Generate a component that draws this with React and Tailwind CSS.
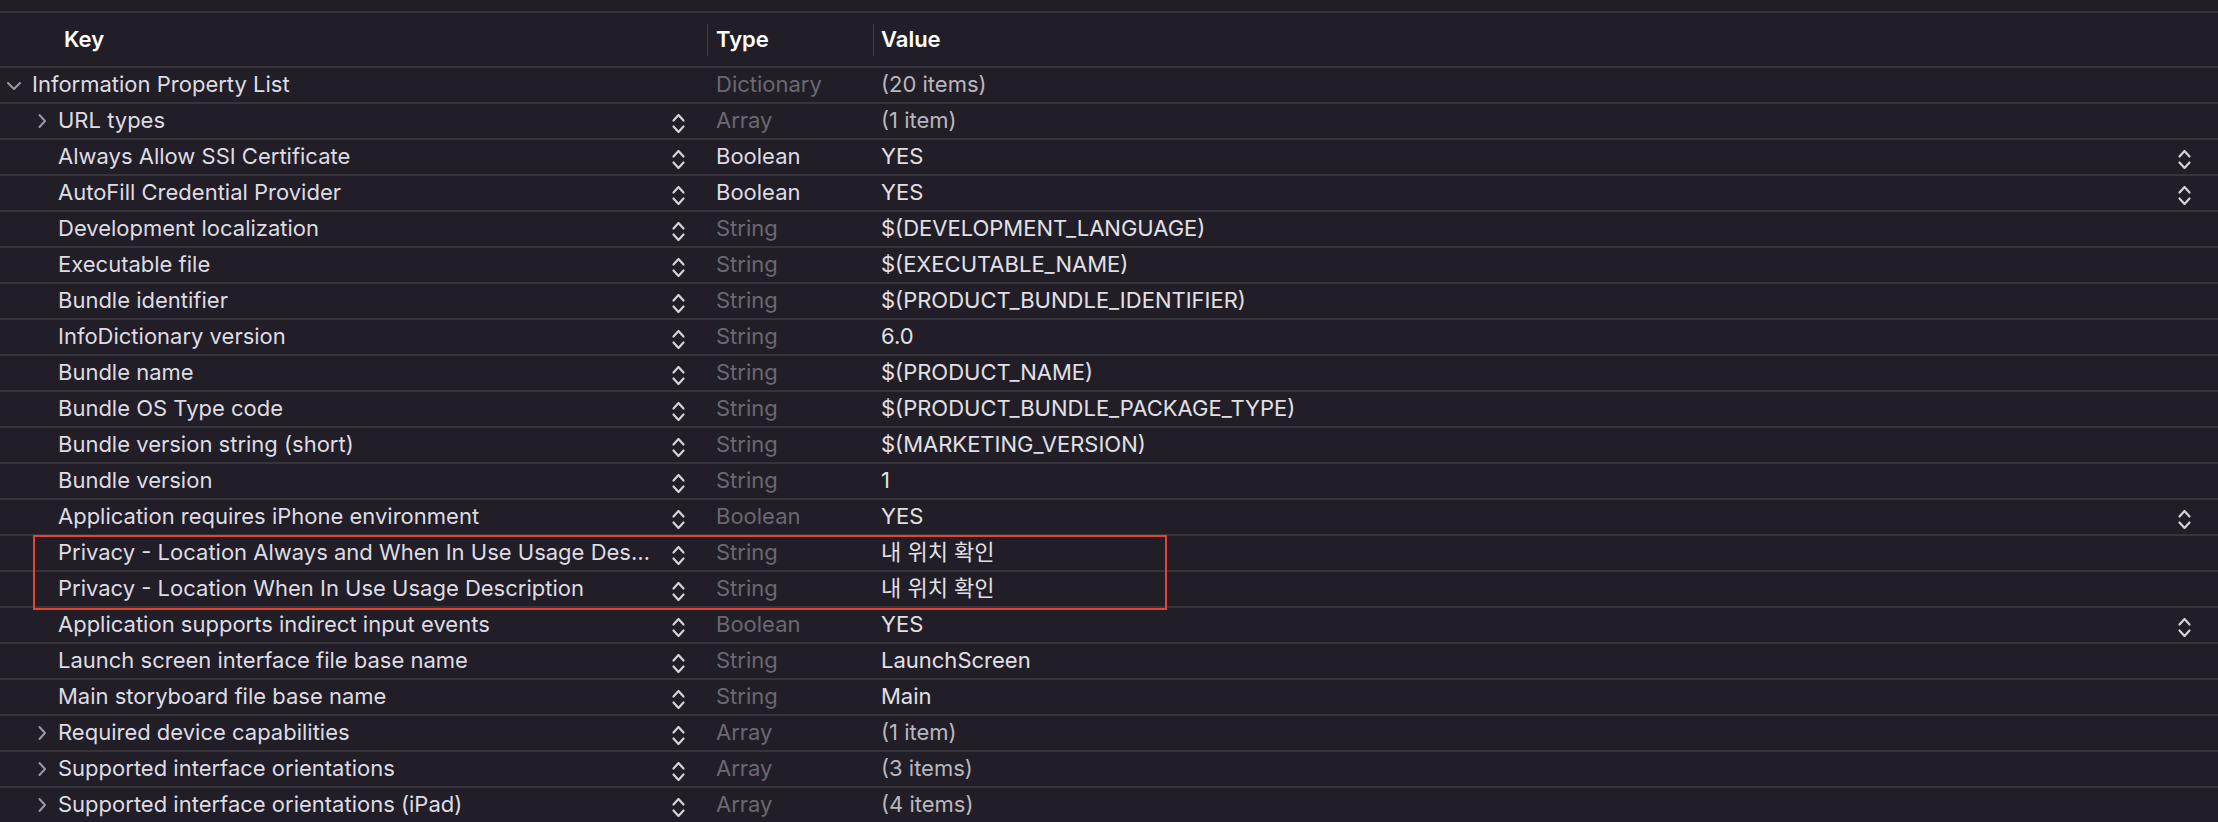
import React from "react";

const rows = [
  { key: "Information Property List", type: "Dictionary", value: "(20 items)", root: true, typeDim: true, valueDim: true, noStepper: true },
  { key: "URL types", type: "Array", value: "(1 item)", expand: true, typeDim: true, valueDim: true },
  { key: "Always Allow SSI Certificate", type: "Boolean", value: "YES", right: true },
  { key: "AutoFill Credential Provider", type: "Boolean", value: "YES", right: true },
  { key: "Development localization", type: "String", value: "$(DEVELOPMENT_LANGUAGE)", typeDim: true },
  { key: "Executable file", type: "String", value: "$(EXECUTABLE_NAME)", typeDim: true },
  { key: "Bundle identifier", type: "String", value: "$(PRODUCT_BUNDLE_IDENTIFIER)", typeDim: true },
  { key: "InfoDictionary version", type: "String", value: "6.0", typeDim: true },
  { key: "Bundle name", type: "String", value: "$(PRODUCT_NAME)", typeDim: true },
  { key: "Bundle OS Type code", type: "String", value: "$(PRODUCT_BUNDLE_PACKAGE_TYPE)", typeDim: true },
  { key: "Bundle version string (short)", type: "String", value: "$(MARKETING_VERSION)", typeDim: true },
  { key: "Bundle version", type: "String", value: "1", typeDim: true },
  { key: "Application requires iPhone environment", type: "Boolean", value: "YES", typeDim: true, right: true },
  { key: "Privacy - Location Always and When In Use Usage Des…", type: "String", value: "내 위치 확인", typeDim: true },
  { key: "Privacy - Location When In Use Usage Description", type: "String", value: "내 위치 확인", typeDim: true },
  { key: "Application supports indirect input events", type: "Boolean", value: "YES", typeDim: true, right: true },
  { key: "Launch screen interface file base name", type: "String", value: "LaunchScreen", typeDim: true },
  { key: "Main storyboard file base name", type: "String", value: "Main", typeDim: true },
  { key: "Required device capabilities", type: "Array", value: "(1 item)", expand: true, typeDim: true, valueDim: true },
  { key: "Supported interface orientations", type: "Array", value: "(3 items)", expand: true, typeDim: true, valueDim: true },
  { key: "Supported interface orientations (iPad)", type: "Array", value: "(4 items)", expand: true, typeDim: true, valueDim: true },
];

function Stepper() {
  return (
    <svg width="15" height="23" viewBox="0 0 15 23" fill="none" stroke="#d4d2d8" strokeWidth="2.2" strokeLinecap="round" strokeLinejoin="round">
      <path d="M2.5 8.5 L7.5 3 L12.5 8.5" />
      <path d="M2.5 14.5 L7.5 20 L12.5 14.5" />
    </svg>
  );
}

function ChevronRight() {
  return (
    <svg width="10" height="16" viewBox="0 0 10 16" fill="none" stroke="#9b99a0" strokeWidth="2" strokeLinecap="round" strokeLinejoin="round">
      <path d="M2.5 2 L8 8 L2.5 14" />
    </svg>
  );
}

function ChevronDown() {
  return (
    <svg width="16" height="10" viewBox="0 0 16 10" fill="none" stroke="#9b99a0" strokeWidth="2" strokeLinecap="round" strokeLinejoin="round">
      <path d="M2 2 L8 8 L14 2" />
    </svg>
  );
}

function Row({ r }) {
  return (
    <div className="flex h-[36px] items-center border-b-2 border-[#36333b]">
      <div className="flex h-full w-[707px] shrink-0 items-center">
        {r.root ? (
          <div className="flex items-center">
            <div className="ml-[6px] flex w-[16px] items-center justify-center pt-[2px]">
              <ChevronDown />
            </div>
            <span className="ml-[10px] whitespace-nowrap pb-[2px] text-[#dedce2]">{r.key}</span>
          </div>
        ) : (
          <div className="flex min-w-0 flex-1 items-center">
            <div className="ml-[37px] flex w-[10px] items-center justify-center">
              {r.expand ? <ChevronRight /> : null}
            </div>
            <span className="ml-[11px] whitespace-nowrap pb-[2px] text-[#dedce2]">{r.key}</span>
          </div>
        )}
        {r.noStepper ? null : (
          <div className="ml-auto mr-[21px] flex shrink-0 items-center pt-[4px]">
            <Stepper />
          </div>
        )}
      </div>
      <div className="flex h-full w-[166px] shrink-0 items-center pl-[9px]">
        <span className={r.typeDim ? "pb-[2px] text-[#6b6870]" : "pb-[2px] text-[#dedce2]"}>{r.type}</span>
      </div>
      <div className="flex h-full min-w-0 flex-1 items-center pl-[8px] pr-[26px]">
        <span className={r.valueDim ? "whitespace-nowrap pb-[2px] text-[#b9b7bd]" : "whitespace-nowrap pb-[2px] text-[#e2e0e5]"}>
          {r.value}
        </span>
        {r.right ? (
          <div className="ml-auto flex items-center pt-[4px]">
            <Stepper />
          </div>
        ) : null}
      </div>
    </div>
  );
}

export default function App() {
  return (
    <div
      className="relative h-[822px] w-[2218px] overflow-hidden bg-[#211e28] text-[22px] leading-[28px]"
      style={{ fontFamily: "Inter, 'Noto Sans CJK KR', sans-serif" }}
    >
      <div className="h-[11px]" />
      <div className="flex h-[57px] items-center border-y-2 border-[#36333b] font-semibold text-white">
        <div className="w-[707px] shrink-0 pb-[2px] pl-[64px]">Key</div>
        <div className="flex h-[32px] w-[166px] shrink-0 items-center border-l border-[#3e3b44] pb-[2px] pl-[8px]">Type</div>
        <div className="flex h-[32px] flex-1 items-center border-l border-[#3e3b44] pb-[2px] pl-[7px]">Value</div>
      </div>
      <div>
        {rows.map((r, i) => (
          <Row key={i} r={r} />
        ))}
      </div>
      <div className="pointer-events-none absolute left-[33px] top-[535px] h-[75px] w-[1134px] border-2 border-[#e4432f]" />
    </div>
  );
}
